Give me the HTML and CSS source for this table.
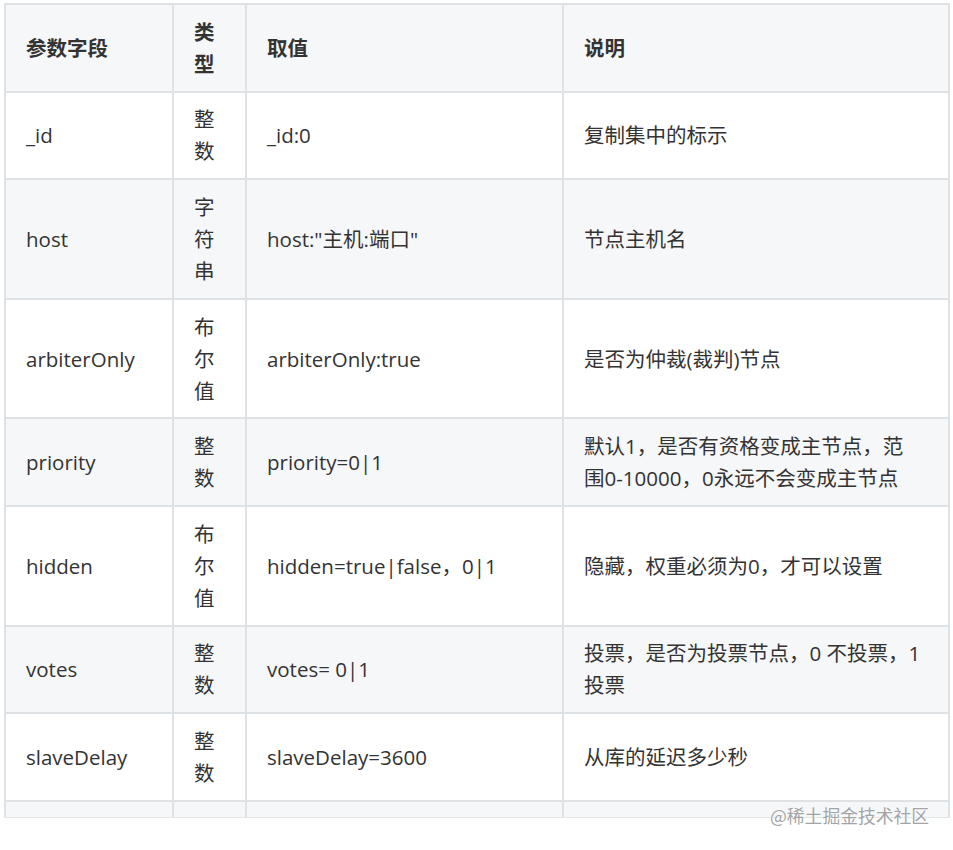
FILE: index.html
```html
<!DOCTYPE html>
<html lang="zh">
<head>
<meta charset="utf-8">
<title>参数字段</title>
<link rel="stylesheet" href="styles.css">
</head>
<body>
<div class="page">
  <div class="frame">
    <table class="params">
      <colgroup>
        <col class="c1"><col class="c2"><col class="c3"><col class="c4">
      </colgroup>
      <thead>
        <tr><th>参数字段</th><th>类型</th><th>取值</th><th>说明</th></tr>
      </thead>
      <tbody>
        <tr><td>_id</td><td>整数</td><td>_id:0</td><td>复制集中的标示</td></tr>
        <tr><td>host</td><td>字符串</td><td>host:"主机:端口"</td><td>节点主机名</td></tr>
        <tr><td>arbiterOnly</td><td>布尔值</td><td>arbiterOnly:true</td><td>是否为仲裁(裁判)节点</td></tr>
        <tr><td>priority</td><td>整数</td><td>priority=0|1</td><td>默认1，是否有资格变成主节点，范围0-10000，0永远不会变成主节点</td></tr>
        <tr><td>hidden</td><td>布尔值</td><td>hidden=true|false，0|1</td><td>隐藏，权重必须为0，才可以设置</td></tr>
        <tr><td>votes</td><td>整数</td><td>votes= 0|1</td><td>投票，是否为投票节点，0 不投票，1 投票</td></tr>
        <tr><td>slaveDelay</td><td>整数</td><td>slaveDelay=3600</td><td>从库的延迟多少秒</td></tr>
        <tr><td>tags</td><td>字符串</td><td>tags:{}</td><td>标签</td></tr>
      </tbody>
    </table>
  </div>
  <div class="mark">@稀土掘金技术社区</div>
</div>
</body>
</html>
```
FILE: styles.css
```css
html, body {
  margin: 0;
  padding: 0;
  background: #ffffff;
}
.page {
  position: relative;
  min-height: 850px;
  box-sizing: border-box;
  padding: 3px 0 0 4px;
}
.frame {
  width: 946px;
  height: 814px;
  overflow: hidden;
  border-bottom: 1px solid #e3e5e7;
}
.params {
  border-collapse: collapse;
  table-layout: fixed;
  width: 944px;
  font-family: "Open Sans", "Noto Sans CJK SC", sans-serif;
  font-size: 20.5px;
  line-height: 32px;
  color: #333333;
}
.c1 { width: 168px; }
.c2 { width: 73px; }
.c3 { width: 317px; }
.c4 { width: 386px; }
.params th,
.params td {
  border: 2px solid #dfe2e5;
  padding: 10.8px 25px 10.8px 20px;
  text-align: left;
  vertical-align: middle;
  word-break: break-all;
}
.params th {
  font-weight: 700;
  background: #f6f7f8;
}
.params tbody tr:nth-child(even) td {
  background: #f6f7f8;
}
.mark {
  position: absolute;
  z-index: 1;
  left: 770px;
  top: 803px;
  font-family: "Noto Sans CJK SC", sans-serif;
  font-size: 17.8px;
  line-height: 24px;
  color: #a2a4a6;
  text-shadow: 0 0 2px #ffffff, 0 0 2px #ffffff;
}
```
